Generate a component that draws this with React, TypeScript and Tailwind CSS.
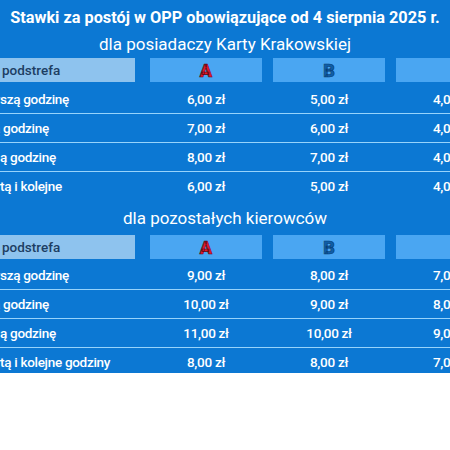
import React from "react";

type Row = { hidden: string; label: string; a: string; b: string; c: string };

const rows1: Row[] = [
  { hidden: "Za pierw", label: "szą godzinę", a: "6,00 zł", b: "5,00 zł", c: "4,00 zł" },
  { hidden: "Za drugą", label: "\u00a0godzinę", a: "7,00 zł", b: "6,00 zł", c: "4,00 zł" },
  { hidden: "Za trzeci", label: "ą godzinę", a: "8,00 zł", b: "7,00 zł", c: "4,00 zł" },
  { hidden: "Za czwar", label: "tą i kolejne", a: "6,00 zł", b: "5,00 zł", c: "4,00 zł" },
];

const rows2: Row[] = [
  { hidden: "Za pierw", label: "szą godzinę", a: "9,00 zł", b: "8,00 zł", c: "7,00 zł" },
  { hidden: "Za drugą", label: "\u00a0godzinę", a: "10,00 zł", b: "9,00 zł", c: "8,00 zł" },
  { hidden: "Za trzeci", label: "ą godzinę", a: "11,00 zł", b: "10,00 zł", c: "9,00 zł" },
  { hidden: "Za czwar", label: "tą i kolejne godziny", a: "8,00 zł", b: "8,00 zł", c: "7,00 zł" },
];

function Header() {
  return (
    <div className="flex h-[24px] items-stretch">
      <div className="w-[135px] shrink-0 bg-[#8ec3ee] flex items-center pl-[2px] text-[13.5px] font-medium text-[#1d3e63] whitespace-nowrap">
        <span className="relative">
          <span className="absolute right-full pr-[6px]">Strefa /</span>podstrefa
        </span>
      </div>
      <div className="w-[112px] shrink-0 ml-[15px] bg-[#4aa6f2] flex items-center justify-center">
        <span className="text-[18px] font-black text-[#e31a2e] [-webkit-text-stroke:0.7px_#5a0610]">A</span>
      </div>
      <div className="w-[112px] shrink-0 ml-[11px] bg-[#4aa6f2] flex items-center justify-center">
        <span className="text-[18px] font-black text-[#0e5ea8] [-webkit-text-stroke:0.6px_#0a3d70]">B</span>
      </div>
      <div className="w-[112px] shrink-0 ml-[11px] bg-[#4aa6f2]" />
    </div>
  );
}

function Rows({ rows }: { rows: Row[] }) {
  return (
    <div className="flex flex-col">
      {rows.map((r, i) => {
        const last = i === rows.length - 1;
        return (
          <div
            key={i}
            className={
              "flex items-center text-[13.5px] tracking-[-0.3px] font-medium text-white " +
              (last ? "h-[28px]" : "h-[29px] border-b-[1.5px] border-[#98d4fb]")
            }
          >
            <div className="w-[135px] shrink-0 whitespace-nowrap">
              <span className="relative">
                <span className="absolute right-full">{r.hidden}</span>
                {r.label}
              </span>
            </div>
            <div className="w-[112px] shrink-0 ml-[15px] text-center">{r.a}</div>
            <div className="w-[112px] shrink-0 ml-[11px] text-center">{r.b}</div>
            <div className="w-[112px] shrink-0 ml-[11px] text-center">{r.c}</div>
          </div>
        );
      })}
    </div>
  );
}

export default function App() {
  return (
    <div className="w-[450px] h-[450px] bg-white overflow-hidden" style={{ fontFamily: 'Roboto, "Noto Sans", sans-serif' }}>
      <div className="bg-[#0c78d3] h-[373px] overflow-hidden">
        <div className="pt-[8px] h-[28px] leading-[20px] text-[16.3px] font-bold text-white whitespace-nowrap text-center">
          Stawki za postój w OPP obowiązujące od 4 sierpnia 2025 r.
        </div>
        <div className="mt-[6px] leading-[20px] text-[17px] text-white text-center">
          dla posiadaczy Karty Krakowskiej
        </div>
        <div className="w-[600px]">
          <div className="mt-[4px]">
            <Header />
          </div>
          <div className="mt-[3px]">
            <Rows rows={rows1} />
          </div>
        </div>
        <div className="mt-[8px] leading-[20px] text-[17px] text-white text-center">
          dla pozostałych kierowców
        </div>
        <div className="w-[600px]">
          <div className="mt-[7px]">
            <Header />
          </div>
          <div className="mt-[2px]">
            <Rows rows={rows2} />
          </div>
        </div>
      </div>
    </div>
  );
}
